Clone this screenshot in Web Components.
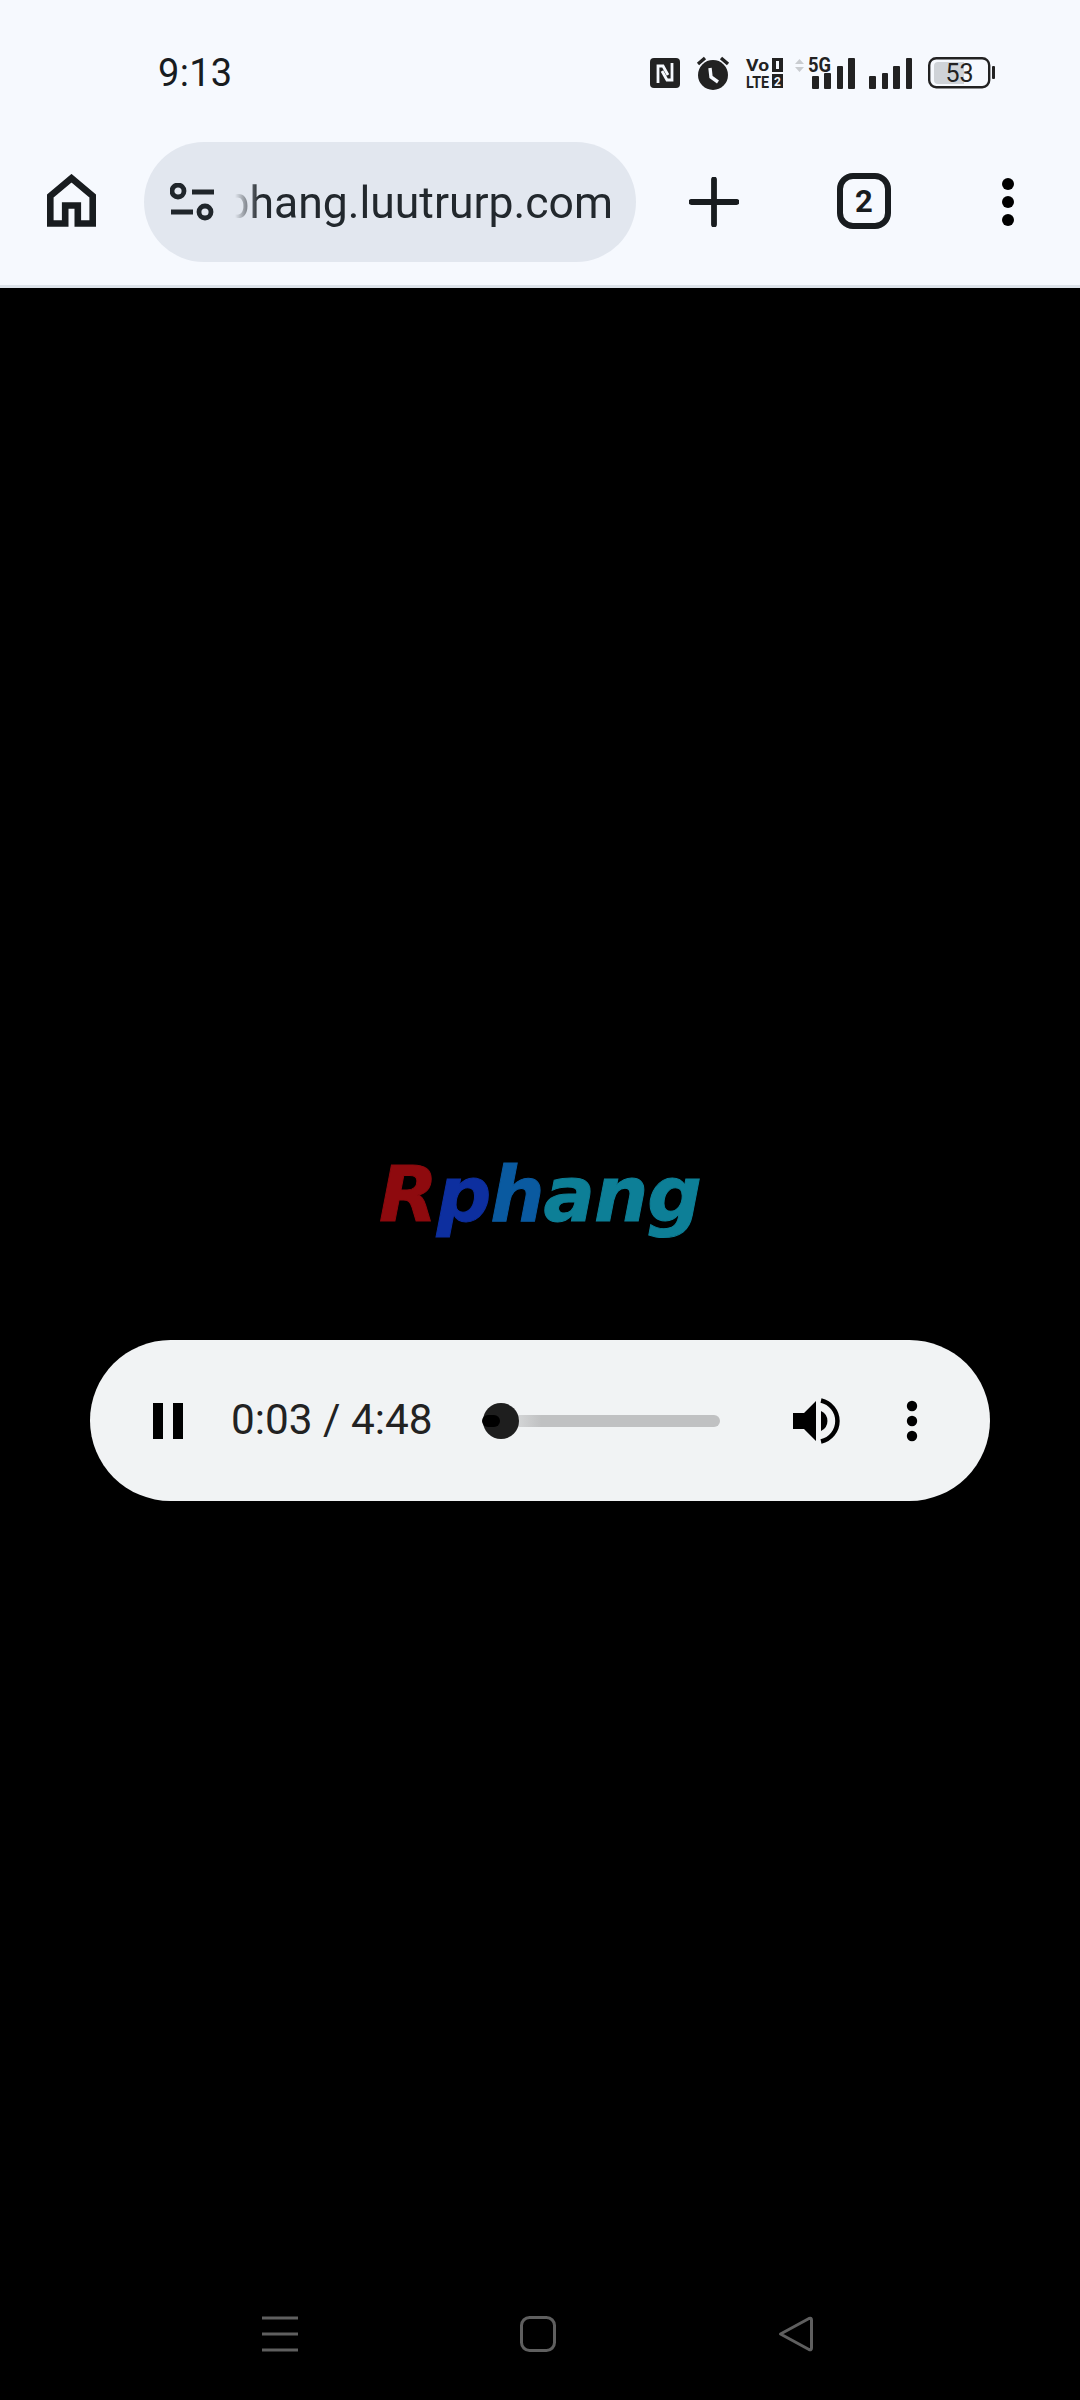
<!DOCTYPE html>
<html lang="en"><head><meta charset="utf-8"><title>Audio</title>
<style>
html,body{margin:0;background:#000}
body{width:1080px;height:2400px;display:flex;flex-direction:column;overflow:hidden;font-family:Roboto,"Noto Sans",sans-serif}
</style></head>
<body>
<phone-status></phone-status>
<browser-toolbar url="rphang.luutrurp.com" tabs="2"></browser-toolbar>
<media-stage>
  <brand-logo></brand-logo>
  <audio-bar current="0:03" total="4:48"></audio-bar>
</media-stage>
<system-nav></system-nav>
<script>
function define(name, html, init){
  customElements.define(name, class extends HTMLElement{
    constructor(){super();const r=this.attachShadow({mode:'open'});const t=document.createElement('template');t.innerHTML=html;r.appendChild(t.content.cloneNode(true));}
    connectedCallback(){if(init)init(this);}
  });
}
define('phone-status',`<style>
:host{display:flex;align-items:center;padding-top:1px;box-sizing:border-box;height:144px;background:#f6f9fe;color:#181c1f;padding-left:158px;margin-bottom:-2px}
.t{font:400 38px/1 Roboto,sans-serif;letter-spacing:.3px;flex:none}
.i{margin-left:auto;display:flex;align-items:center;padding-right:85px;gap:0}
svg{display:block;flex:none;overflow:visible}
text{font-family:Roboto,sans-serif;fill:#222}
</style>
<div class="t">9:13</div>
<div class="i">
<svg width="30" height="32" viewBox="0 0 30 32" style="margin-right:17px"><rect y="1" width="30" height="30" rx="4" fill="#222"/><path d="M8 26V9h5l5 9M22 6V23h-5l-5-9" fill="none" stroke="#f6f9fe" stroke-width="2.800"/></svg>
<svg width="32" height="34" viewBox="0 0 32 34" style="margin-right:17px"><circle cx="16" cy="19" r="15" fill="#222"/><path d="M1 8l7-6M31 8l-7-6" stroke="#222" stroke-width="3.4"/><path d="M13 12l1 9 7 5" fill="none" stroke="#f6f9fe" stroke-width="3.4"/></svg>
<svg width="37" height="32" viewBox="0 0 37 32" style="margin-right:12px"><text x="0" y="14" font-size="17" font-weight="700" textLength="23" lengthAdjust="spacingAndGlyphs">Vo</text><rect x="26" y="1" width="11" height="14" fill="#222"/><rect x="30" y="4" width="3" height="8" fill="#f6f9fe"/><text x="0" y="31" font-size="17" font-weight="700" textLength="23" lengthAdjust="spacingAndGlyphs">LTE</text><rect x="26" y="17" width="11" height="14" fill="#222"/><text x="28" y="29" font-size="12" font-weight="700" style="fill:#f6f9fe">2</text></svg>
<svg width="60" height="34" viewBox="0 0 60 34" style="margin-right:14px"><path d="M0 8l4.500-5 4.500 5zM0 11l4.500 5 4.500-5z" fill="#c9ccd0"/><text x="13" y="16" font-size="20" font-weight="700" textLength="23" lengthAdjust="spacingAndGlyphs">5G</text><g fill="#222"><rect x="17" y="20" width="7" height="13" rx="1"/><rect x="29" y="17" width="7" height="16" rx="1"/><rect x="42" y="10" width="6" height="23" rx="1"/><rect x="53" y="2" width="7" height="31" rx="1"/></g></svg>
<svg width="43" height="34" viewBox="0 0 43 34" style="margin-right:16px"><g fill="#222"><rect x="0" y="20" width="7" height="13" rx="1"/><rect x="13" y="17" width="6" height="16" rx="1"/><rect x="24" y="10" width="7" height="23" rx="1"/><rect x="37" y="2" width="6" height="31" rx="1"/></g></svg>
<svg width="67" height="34" viewBox="0 0 67 34"><rect x="1.200" y="2.200" width="60" height="29" rx="7" fill="none" stroke="#222" stroke-width="2.400"/><path d="M6 10a4 4 0 0 1 4-4h26v22H10a4 4 0 0 1-4-4z" fill="#cfd3d8"/><rect x="64" y="10" width="3" height="13" rx="1" fill="#222"/><text x="31.500" y="26" font-size="25" text-anchor="middle">53</text></svg>
</div>`);
define('browser-toolbar',`<style>
:host{display:flex;align-items:flex-start;height:146px;box-sizing:border-box;background:#f6f9fe;border-bottom:3px solid #dde3ea;color:#181c1f;padding-left:47px}
svg{display:block;flex:none}
.pill{width:492px;height:120px;border-radius:60px;background:#e2e7ef;margin-left:48px;display:flex;align-items:center;padding-left:26px;box-sizing:border-box;flex:none}
.url{width:378px;margin-left:19px;overflow:hidden;display:flex;justify-content:flex-end;font:400 44.5px/60px Roboto,sans-serif;color:#22282d;white-space:nowrap;padding-top:2px;-webkit-mask-image:linear-gradient(90deg,transparent 0,#000 24px);mask-image:linear-gradient(90deg,transparent 0,#000 24px)}
</style>
<svg width="49" height="53" viewBox="0 0 49 53" style="margin-top:32px"><path d="M3.300 49.500V22L24.500 4.200 45.700 22V49.500H30.800V31.500H18.200V49.500Z" fill="none" stroke="#181c1f" stroke-width="6.600"/></svg>
<div class="pill">
<svg width="46" height="38" viewBox="0 0 46 38"><g fill="none" stroke="#20262b" stroke-width="4.800"><circle cx="8" cy="8" r="6"/><circle cx="35" cy="29" r="6"/><path d="M22 9H44M1 29H23"/></g></svg>
<div class="url"><span id="u"></span></div>
</div>
<svg width="50" height="50" viewBox="0 0 50 50" style="margin:35px 0 0 53px"><path d="M25 2.500V47.500M2.500 25H47.500" stroke="#181c1f" stroke-width="5.800" stroke-linecap="round"/></svg>
<svg width="54" height="56" viewBox="0 0 54 56" style="margin:31px 0 0 98px"><rect x="3" y="3" width="48" height="50" rx="13" fill="none" stroke="#181c1f" stroke-width="6"/><text id="n" x="27" y="39" text-anchor="middle" font-family="Roboto,sans-serif" font-weight="700" font-size="31" fill="#181c1f"></text></svg>
<svg width="14" height="50" viewBox="0 0 14 50" style="margin:35px 0 0 110px"><circle cx="7" cy="7" r="6"/><circle cx="7" cy="25" r="6"/><circle cx="7" cy="43" r="6"/></svg>`,
el=>{el.shadowRoot.getElementById('u').textContent=el.getAttribute('url');el.shadowRoot.getElementById('n').textContent=el.getAttribute('tabs');});
define('media-stage',`<style>:host{display:flex;flex-direction:column;align-items:flex-start;padding-top:868px;flex:1;box-sizing:border-box;min-height:0}</style><slot></slot>`);
define('brand-logo',`<style>
:host{display:block;margin-left:379px;height:78px;width:325px;overflow:visible}
.w{display:block;font:italic 700 77px/78px "DejaVu Sans",sans-serif;white-space:nowrap;transform-origin:0 50%;transform:scaleX(.99);letter-spacing:-1px;-webkit-text-stroke:1px currentColor;color:#0d7f97;width:max-content}
.r{color:#8e0a0e}
.p{color:#0d2f9f}.h{color:#0a5aa0}
</style><span class="w"><span class="r">R</span><span class="p">p</span><span class="h">h</span>ang</span>`);
define('audio-bar',`<style>
:host{display:flex;align-items:center;margin:106px 0 0 90px;width:900px;height:161px;border-radius:81px;background:#f1f3f4;box-sizing:border-box;padding-left:63px;flex:none}
svg{display:block;flex:none}
.time{font:400 42.3px/1 Roboto,sans-serif;color:#222;margin-left:48px;white-space:nowrap;width:201px;flex:none}
.seek{position:relative;width:238px;height:12px;margin-left:50px;border-radius:6px;background:linear-gradient(90deg,#f1f3f4 0,#c0c1c2 25%);flex:none}
.fill{position:absolute;left:0;top:0;width:18px;height:12px;border-radius:6px;background:#000;z-index:1}
.thumb{position:absolute;left:1px;top:-12px;width:36px;height:36px;border-radius:50%;background:#1e1e1e}
</style>
<svg width="30" height="36" viewBox="0 0 30 36"><rect width="10" height="36"/><rect x="20" width="10" height="36"/></svg>
<div class="time"><span id="c"></span> / <span id="t"></span></div>
<div class="seek" role="slider"><div class="thumb"></div><div class="fill"></div></div>
<svg width="47" height="46" viewBox="0 0 47 46" style="margin-left:73px"><path d="M0 15H11L23 3V43L11 31H0Z"/><path d="M28 13a11 11 0 0 1 0 20z"/><path d="M28 2.500a21 21 0 0 1 0 41" fill="none" stroke="#000" stroke-width="4.500"/></svg>
<svg width="12" height="42" viewBox="0 0 12 42" style="margin-left:66px"><circle cx="6" cy="6" r="5.200"/><circle cx="6" cy="21" r="5.200"/><circle cx="6" cy="36" r="5.200"/></svg>`,
el=>{el.shadowRoot.getElementById('c').textContent=el.getAttribute('current');el.shadowRoot.getElementById('t').textContent=el.getAttribute('total');});
define('system-nav',`<style>
:host{display:flex;align-items:center;height:36px;margin-bottom:48px;padding-left:262px;flex:none}
svg{display:block;flex:none}
</style>
<svg width="36" height="36" viewBox="0 0 36 36"><path d="M0 2H36M0 18H36M0 34H36" stroke="#5f5f5f" stroke-width="3"/></svg>
<svg width="36" height="36" viewBox="0 0 36 36" style="margin-left:222px"><rect x="1.500" y="1.500" width="33" height="33" rx="8" fill="none" stroke="#5f5f5f" stroke-width="3"/></svg>
<svg width="35" height="36" viewBox="0 0 35 36" style="margin-left:222px"><path d="M2.500 18L31 2.500Q33.500 1.500 33.500 4V32Q33.500 34.500 31 33.500Z" fill="none" stroke="#5f5f5f" stroke-width="3" stroke-linejoin="round"/></svg>`);
</script>
</body></html>
